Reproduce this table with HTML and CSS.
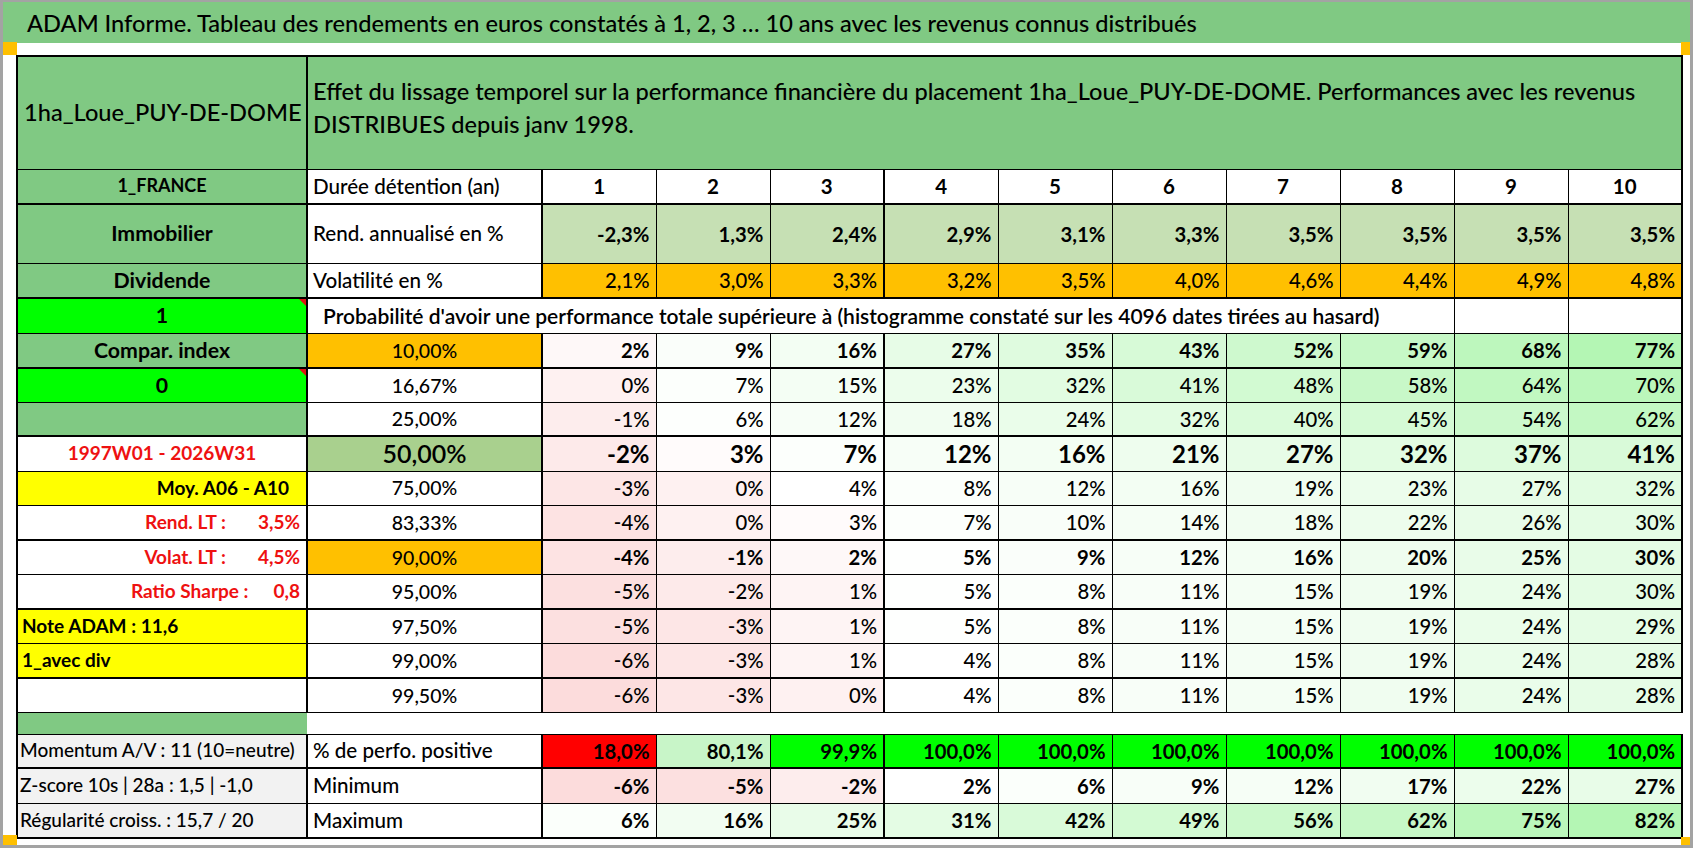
FILE: index.html
```html
<!DOCTYPE html>
<html lang="fr">
<head>
<meta charset="utf-8">
<title>ADAM Informe</title>
<link rel="stylesheet" href="styles.css">
</head>
<body>
<div class="sheet">
  <div class="title">ADAM Informe. Tableau des rendements en euros constatés à 1, 2, 3 … 10 ans avec les revenus connus distribués</div>
  <div class="strip"></div>
  <table class="grid">
    <colgroup>
      <col class="ca"><col class="cb"><col class="cv k1"><col class="cv"><col class="cv"><col class="cv k4"><col class="cv"><col class="cv"><col class="cv"><col class="cv"><col class="cv"><col class="cv">
    </colgroup>
    <tr class="h113">
      <td class="g c hd">1ha_Loue_PUY-DE-DOME</td>
      <td colspan="11" class="g hd eff">Effet du lissage temporel sur la performance financière du placement 1ha_Loue_PUY-DE-DOME. Performances avec les revenus<br>DISTRIBUES depuis janv 1998.</td>
    </tr>
    <tr class="h35 tb">
      <td class="g c b sm">1_FRANCE</td>
      <td class="lbl">Durée détention (an)</td>
      <td class="c b num">1</td><td class="c b num">2</td><td class="c b num">3</td><td class="c b num">4</td><td class="c b num">5</td><td class="c b num">6</td><td class="c b num">7</td><td class="c b num">8</td><td class="c b num">9</td><td class="c b num">10</td>
    </tr>
    <tr class="h59 bv">
      <td class="g c b lab">Immobilier</td>
      <td class="lbl">Rend. annualisé en %</td>
      <td class="lg v">-2,3%</td><td class="lg v">1,3%</td><td class="lg v">2,4%</td><td class="lg v">2,9%</td><td class="lg v">3,1%</td><td class="lg v">3,3%</td><td class="lg v">3,5%</td><td class="lg v">3,5%</td><td class="lg v">3,5%</td><td class="lg v">3,5%</td>
    </tr>
    <tr class="h35 tb">
      <td class="g c b lab">Dividende</td>
      <td class="lbl">Volatilité en %</td>
      <td class="or v">2,1%</td><td class="or v">3,0%</td><td class="or v">3,3%</td><td class="or v">3,2%</td><td class="or v">3,5%</td><td class="or v">4,0%</td><td class="or v">4,6%</td><td class="or v">4,4%</td><td class="or v">4,9%</td><td class="or v">4,8%</td>
    </tr>
    <tr class="h35">
      <td class="gb c b lab note">1</td>
      <td colspan="9" class="lbl prob">Probabilité d'avoir une performance totale supérieure à (histogramme constaté sur les 4096 dates tirées au hasard)</td>
      <td></td><td></td>
    </tr>
    <tr class="h35 tb bv">
      <td class="g c b lab">Compar. index</td>
      <td class="or c pc">10,00%</td>
      <td class="v" style="background:rgb(254,248,248)">2%</td><td class="v" style="background:rgb(250,254,250)">9%</td><td class="v" style="background:rgb(243,254,243)">16%</td><td class="v" style="background:rgb(231,252,231)">27%</td><td class="v" style="background:rgb(223,251,223)">35%</td><td class="v" style="background:rgb(215,250,215)">43%</td><td class="v" style="background:rgb(206,249,206)">52%</td><td class="v" style="background:rgb(199,248,199)">59%</td><td class="v" style="background:rgb(189,247,189)">68%</td><td class="v" style="background:rgb(180,246,180)">77%</td>
    </tr>
    <tr class="h34">
      <td class="gb c b lab note">0</td>
      <td class="c pc">16,67%</td>
      <td class="v" style="background:rgb(254,241,241)">0%</td><td class="v" style="background:rgb(252,255,252)">7%</td><td class="v" style="background:rgb(244,254,244)">15%</td><td class="v" style="background:rgb(236,253,236)">23%</td><td class="v" style="background:rgb(226,252,226)">32%</td><td class="v" style="background:rgb(217,250,217)">41%</td><td class="v" style="background:rgb(210,250,210)">48%</td><td class="v" style="background:rgb(200,248,200)">58%</td><td class="v" style="background:rgb(193,248,193)">64%</td><td class="v" style="background:rgb(187,247,187)">70%</td>
    </tr>
    <tr class="h34 tb">
      <td class="g"></td>
      <td class="c pc">25,00%</td>
      <td class="v" style="background:rgb(253,237,237)">-1%</td><td class="v" style="background:rgb(253,255,253)">6%</td><td class="v" style="background:rgb(247,254,247)">12%</td><td class="v" style="background:rgb(241,253,241)">18%</td><td class="v" style="background:rgb(234,253,234)">24%</td><td class="v" style="background:rgb(226,252,226)">32%</td><td class="v" style="background:rgb(218,251,218)">40%</td><td class="v" style="background:rgb(213,250,213)">45%</td><td class="v" style="background:rgb(204,249,204)">54%</td><td class="v" style="background:rgb(195,248,195)">62%</td>
    </tr>
    <tr class="h35 bv big">
      <td class="c b red dates">1997W01 - 2026W31</td>
      <td class="mg c pcbig">50,00%</td>
      <td class="v" style="background:rgb(253,234,234)">-2%</td><td class="v" style="background:rgb(255,251,251)">3%</td><td class="v" style="background:rgb(252,255,252)">7%</td><td class="v" style="background:rgb(247,254,247)">12%</td><td class="v" style="background:rgb(243,254,243)">16%</td><td class="v" style="background:rgb(238,253,238)">21%</td><td class="v" style="background:rgb(231,252,231)">27%</td><td class="v" style="background:rgb(226,252,226)">32%</td><td class="v" style="background:rgb(221,251,221)">37%</td><td class="v" style="background:rgb(217,250,217)">41%</td>
    </tr>
    <tr class="h34">
      <td class="yl r b moy">Moy. A06 - A10</td>
      <td class="c pc">75,00%</td>
      <td class="v" style="background:rgb(253,230,230)">-3%</td><td class="v" style="background:rgb(254,241,241)">0%</td><td class="v">4%</td><td class="v" style="background:rgb(251,255,251)">8%</td><td class="v" style="background:rgb(247,254,247)">12%</td><td class="v" style="background:rgb(243,254,243)">16%</td><td class="v" style="background:rgb(240,253,240)">19%</td><td class="v" style="background:rgb(236,253,236)">23%</td><td class="v" style="background:rgb(231,252,231)">27%</td><td class="v" style="background:rgb(226,252,226)">32%</td>
    </tr>
    <tr class="h35 tb">
      <td class="r b red">Rend. LT :<span class="lt">3,5%</span></td>
      <td class="c pc">83,33%</td>
      <td class="v" style="background:rgb(253,227,227)">-4%</td><td class="v" style="background:rgb(254,241,241)">0%</td><td class="v" style="background:rgb(255,251,251)">3%</td><td class="v" style="background:rgb(252,255,252)">7%</td><td class="v" style="background:rgb(249,254,249)">10%</td><td class="v" style="background:rgb(245,254,245)">14%</td><td class="v" style="background:rgb(241,253,241)">18%</td><td class="v" style="background:rgb(237,253,237)">22%</td><td class="v" style="background:rgb(232,252,232)">26%</td><td class="v" style="background:rgb(228,252,228)">30%</td>
    </tr>
    <tr class="h34 bv">
      <td class="r b red">Volat. LT :<span class="lt">4,5%</span></td>
      <td class="or c pc">90,00%</td>
      <td class="v" style="background:rgb(253,227,227)">-4%</td><td class="v" style="background:rgb(253,237,237)">-1%</td><td class="v" style="background:rgb(254,248,248)">2%</td><td class="v" style="background:rgb(254,255,254)">5%</td><td class="v" style="background:rgb(250,254,250)">9%</td><td class="v" style="background:rgb(247,254,247)">12%</td><td class="v" style="background:rgb(243,254,243)">16%</td><td class="v" style="background:rgb(239,253,239)">20%</td><td class="v" style="background:rgb(233,252,233)">25%</td><td class="v" style="background:rgb(228,252,228)">30%</td>
    </tr>
    <tr class="h35 tb">
      <td class="r b red">Ratio Sharpe :<span class="sh">0,8</span></td>
      <td class="c pc">95,00%</td>
      <td class="v" style="background:rgb(252,224,224)">-5%</td><td class="v" style="background:rgb(253,234,234)">-2%</td><td class="v" style="background:rgb(254,244,244)">1%</td><td class="v" style="background:rgb(254,255,254)">5%</td><td class="v" style="background:rgb(251,255,251)">8%</td><td class="v" style="background:rgb(248,254,248)">11%</td><td class="v" style="background:rgb(244,254,244)">15%</td><td class="v" style="background:rgb(240,253,240)">19%</td><td class="v" style="background:rgb(234,253,234)">24%</td><td class="v" style="background:rgb(228,252,228)">30%</td>
    </tr>
    <tr class="h34">
      <td class="yl b note-l">Note ADAM : 11,6</td>
      <td class="c pc">97,50%</td>
      <td class="v" style="background:rgb(252,224,224)">-5%</td><td class="v" style="background:rgb(253,230,230)">-3%</td><td class="v" style="background:rgb(254,244,244)">1%</td><td class="v" style="background:rgb(254,255,254)">5%</td><td class="v" style="background:rgb(251,255,251)">8%</td><td class="v" style="background:rgb(248,254,248)">11%</td><td class="v" style="background:rgb(244,254,244)">15%</td><td class="v" style="background:rgb(240,253,240)">19%</td><td class="v" style="background:rgb(234,253,234)">24%</td><td class="v" style="background:rgb(229,252,229)">29%</td>
    </tr>
    <tr class="h35 tb">
      <td class="yl b note-l">1_avec div</td>
      <td class="c pc">99,00%</td>
      <td class="v" style="background:rgb(252,220,220)">-6%</td><td class="v" style="background:rgb(253,230,230)">-3%</td><td class="v" style="background:rgb(254,244,244)">1%</td><td class="v">4%</td><td class="v" style="background:rgb(251,255,251)">8%</td><td class="v" style="background:rgb(248,254,248)">11%</td><td class="v" style="background:rgb(244,254,244)">15%</td><td class="v" style="background:rgb(240,253,240)">19%</td><td class="v" style="background:rgb(234,253,234)">24%</td><td class="v" style="background:rgb(230,252,230)">28%</td>
    </tr>
    <tr class="h34">
      <td></td>
      <td class="c pc">99,50%</td>
      <td class="v" style="background:rgb(252,220,220)">-6%</td><td class="v" style="background:rgb(253,230,230)">-3%</td><td class="v" style="background:rgb(254,241,241)">0%</td><td class="v">4%</td><td class="v" style="background:rgb(251,255,251)">8%</td><td class="v" style="background:rgb(248,254,248)">11%</td><td class="v" style="background:rgb(244,254,244)">15%</td><td class="v" style="background:rgb(240,253,240)">19%</td><td class="v" style="background:rgb(234,253,234)">24%</td><td class="v" style="background:rgb(230,252,230)">28%</td>
    </tr>
    <tr class="h22">
      <td class="g"></td>
      <td colspan="11" class="gap"></td>
    </tr>
    <tr class="h34 tb bv">
      <td class="gr bt">Momentum A/V : 11 (10=neutre)</td>
      <td class="lbl">% de perfo. positive</td>
      <td class="v rdb">18,0%</td><td class="v" style="background:#c8f5c8">80,1%</td><td class="v gb">99,9%</td><td class="v gb">100,0%</td><td class="v gb">100,0%</td><td class="v gb">100,0%</td><td class="v gb">100,0%</td><td class="v gb">100,0%</td><td class="v gb">100,0%</td><td class="v gb">100,0%</td>
    </tr>
    <tr class="h35 bv">
      <td class="gr bt">Z-score 10s | 28a : 1,5 | -1,0</td>
      <td class="lbl">Minimum</td>
      <td class="v" style="background:rgb(252,220,220)">-6%</td><td class="v" style="background:rgb(252,224,224)">-5%</td><td class="v" style="background:rgb(253,237,237)">-2%</td><td class="v">2%</td><td class="v" style="background:rgb(251,255,251)">6%</td><td class="v" style="background:rgb(248,254,248)">9%</td><td class="v" style="background:rgb(246,254,246)">12%</td><td class="v" style="background:rgb(241,253,241)">17%</td><td class="v" style="background:rgb(236,253,236)">22%</td><td class="v" style="background:rgb(232,252,232)">27%</td>
    </tr>
    <tr class="h35 bv">
      <td class="gr bt">Régularité croiss. : 15,7 / 20</td>
      <td class="lbl">Maximum</td>
      <td class="v" style="background:rgb(251,255,251)">6%</td><td class="v" style="background:rgb(242,253,242)">16%</td><td class="v" style="background:rgb(233,252,233)">25%</td><td class="v" style="background:rgb(228,252,228)">31%</td><td class="v" style="background:rgb(217,250,217)">42%</td><td class="v" style="background:rgb(211,250,211)">49%</td><td class="v" style="background:rgb(204,249,204)">56%</td><td class="v" style="background:rgb(199,248,199)">62%</td><td class="v" style="background:rgb(187,247,187)">75%</td><td class="v" style="background:rgb(180,246,180)">82%</td>
    </tr>
  </table>
  <span class="mark tl"></span>
  <span class="mark tr"></span>
  <span class="mark bl"></span>
  <span class="mark br"></span>
</div>
</body>
</html>
```

FILE: styles.css
```css
html, body {
  margin: 0;
  padding: 0;
  background: #ffffff;
}

body {
  font-family: Lato, "Noto Sans", "Liberation Sans", sans-serif;
  font-weight: 500;
  color: #000;
}

.sheet {
  position: relative;
  width: 1687px;
  height: 843px;
  border-top: 2px solid #a3a3a3;
  border-left: 3px solid #a3a3a3;
  border-right: 3px solid #a3a3a3;
  border-bottom: 3px solid #a3a3a3;
  overflow: hidden;
}

.title {
  height: 41px;
  background: #80c983;
  display: flex;
  align-items: center;
  padding-left: 24px;
  font-size: 23.6px;
  font-weight: 500;
  white-space: nowrap;
}

.strip {
  height: 12px;
}

.grid {
  margin-left: 13px;
  width: 1665px;
  table-layout: fixed;
  border-collapse: collapse;
  border: 2px solid #000;
}

.ca { width: 290px; }
.cb { width: 235px; }
.cv { width: 114px; }
.k1 { border-left: 2px solid #000; }
.k4 { border-left: 2px solid #000; }

.grid td {
  border: 1px solid #000;
  padding: 0 6px;
  white-space: nowrap;
  overflow: hidden;
  font-size: 20.3px;
  line-height: 1.1;
  vertical-align: middle;
}

.h113 { height: 113px; }
.h59 { height: 59px; }
.h35 { height: 35px; }
.h34 { height: 34px; }
.h22 { height: 22px; }

.tb td { border-bottom: 2px solid #000; }
.grid tr td:first-child { border-right: 2px solid #000; }

/* backgrounds */
.g { background: #80c983; }
.gb { background: #00ff00; }
.lg { background: #c6e0b4; }
.or { background: #ffc000; }
.yl { background: #ffff00; }
.mg { background: #a9d08e; }
.gr { background: #f2f2f2; }
.rdb { background: #ff0000; }

/* alignment & weight */
.c { text-align: center; }
.r { text-align: right; }
.grid td.b { font-weight: 700; font-size: 19.5px; }
.grid td.lab { font-size: 21.3px; }
.grid td.num { font-size: 20.5px; }
.v { text-align: right; }
.grid .bv td.v { font-weight: 700; }
.grid .big td.v { font-size: 24px; }
.red { color: #ee1111; }

.grid td.hd { font-size: 23.6px; }
.grid td.eff {
  line-height: 33px;
  padding-bottom: 10px;
  padding-left: 5px;
}
.grid td.sm { font-size: 18px; }
.grid td.lbl { font-size: 20.6px; padding-left: 5px; }
.grid td.prob { padding-left: 15px; font-weight: 600; font-size: 21px; }
.grid td.pc { font-size: 19.5px; }
.grid td.pcbig { font-size: 25px; font-weight: 600; }
.grid td.dates { font-size: 19px; }
.grid td.red.r { font-size: 19px; }
.grid td.moy { padding-right: 17px; font-size: 19px; }
.grid td.note-l { padding-left: 4px; font-size: 19px; }
.grid td.bt { font-size: 19px; padding-left: 2px; }

.lt { margin-left: 32px; }
.sh { margin-left: 25px; }

.grid td.gap {
  background: #fff;
  border-left: hidden;
  border-right: hidden;
}

.note { position: relative; }
.note::after {
  content: "";
  position: absolute;
  top: 0;
  right: 0;
  border-top: 7px solid #e01010;
  border-left: 7px solid transparent;
}

.mark {
  position: absolute;
  background: #ffc000;
}
.mark.tl { left: -3px; top: 40px; width: 17px; height: 13px; }
.mark.tr { left: 1678px; top: 40px; width: 15px; height: 13px; }
.mark.bl { left: -3px; top: 833px; width: 17px; height: 12px; }
.mark.br { left: 1678px; top: 835px; width: 12px; height: 10px; }
```
